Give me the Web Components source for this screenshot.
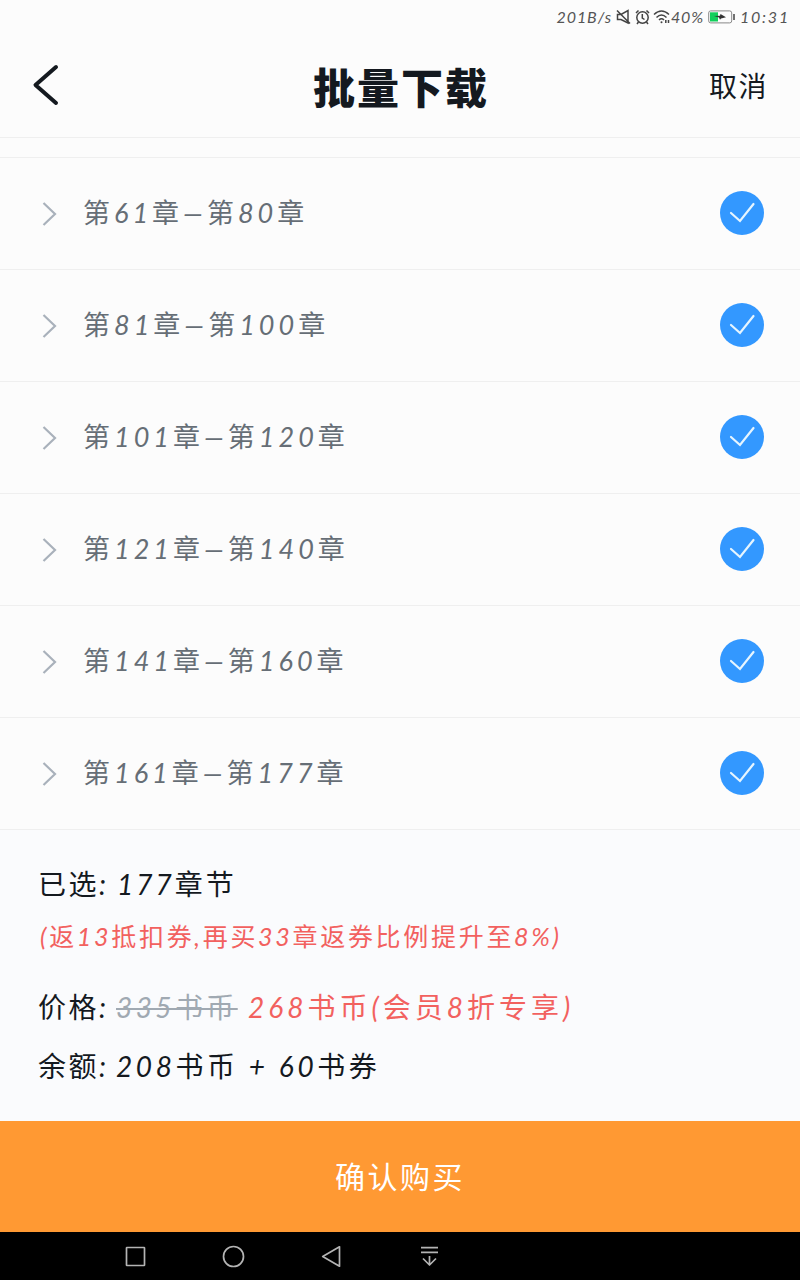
<!DOCTYPE html>
<html lang="zh-CN">
<head>
<meta charset="UTF-8">
<meta name="viewport" content="width=device-width, initial-scale=1">
<title>批量下载</title>
<style>
  body {
    margin: 0;
    background: #fcfcfc;
  }
</style>
</head>
<body>
<download-page></download-page>

<script>
class StatusBar extends HTMLElement {
    constructor() {
        super();
        this.attachShadow({ mode: 'open' });
    }

    connectedCallback() {
        this.shadowRoot.innerHTML = `
        <style>
  :host {
    display: flex;
    justify-content: flex-end;
    align-items: center;
    height: 33px;
    padding-right: 11px;
    box-sizing: border-box;
    font-size: 16px;
    color: #555;
    white-space: nowrap;
  }
  .speed { letter-spacing: 0.9px; }
  .battery { letter-spacing: 0.8px; }
  .time { letter-spacing: 1.8px; margin-right: -1px; }
  svg {
    display: block;
    fill: none;
    stroke: #444;
    stroke-width: 1.5;
  }
  .mute { margin-left: 4px; }
  .alarm { margin-left: 4px; }
  .wifi { margin-left: 3px; }
  .cell { margin: 0 5px 0 4px; }
        </style>
        <span class="speed">201B/s</span>
        <svg class="mute" width="15" height="16" viewBox="0 0 15 16">
            <path d="M1.5 5.5H5L12 1.5V14L5 10.5H1.5ZM1 1.5L14 14.5"/>
        </svg>
        <svg class="alarm" width="15" height="16" viewBox="0 0 15 16">
            <circle cx="7.5" cy="8.5" r="5.7"/>
            <path d="M7.3 5V9L9.5 10.5M1 4L3.5 1.5M14 4L11.5 1.5M3.5 13L2 15M11.5 13L13 15"/>
        </svg>
        <svg class="wifi" width="18" height="16" viewBox="0 0 18 16">
            <path d="M1 5.5Q8.5 -1.5 16 5.5M3.5 8.5Q8.5 3.5 13.5 8.5M6 11Q8.5 8.5 11 11"/>
            <circle cx="8.5" cy="13.2" r="1" fill="#444" stroke="none"/>
            <path d="M12.8 11V14M15.5 11V14"/>
        </svg>
        <span class="battery">40%</span>
        <svg class="cell" width="27" height="14" viewBox="0 0 27 14">
            <rect x="0.7" y="0.9" width="23" height="12" rx="2" stroke="#888" stroke-width="1"/>
            <rect x="2" y="2.3" width="8" height="9.2" fill="#11cf5b" stroke="none"/>
            <path d="M6 6L12 5.7L12.5 4L18 7.3L13 8.5L12 9.8L11 7.5Z" fill="#333" stroke="none"/>
            <path d="M26 4V10"/>
        </svg>
        <span class="time">10:31</span>
        `;
    }
}

class PageHeader extends HTMLElement {
    constructor() {
        super();
        this.attachShadow({ mode: 'open' });
    }

    connectedCallback() {
        this.shadowRoot.innerHTML = `
        <style>
  :host {
    display: grid;
    grid-template-columns: 1fr auto 1fr;
    align-items: center;
    height: 105px;
    padding: 0 32px;
    box-sizing: border-box;
    border-bottom: 1px solid #efefef;
    color: #14191f;
  }
  svg {
    display: block;
    fill: none;
    stroke: #14191f;
    stroke-width: 4;
    stroke-linecap: round;
    stroke-linejoin: round;
  }
  h1 {
    margin: 5px -2px 0 0;
    font-size: 42px;
    font-weight: 900;
    font-style: normal;
    line-height: 60px;
    letter-spacing: 2px;
  }
  .cancel {
    justify-self: end;
    margin-top: 2px;
    font-size: 28px;
    line-height: 40px;
    letter-spacing: 1.5px;
  }
        </style>
        <svg width="28" height="42" viewBox="0 0 28 42"><path d="M24 3L3.5 21L24 39"/></svg>
        <h1><slot></slot></h1>
        <span class="cancel"><slot name="action"></slot></span>
        `;
    }
}

class ChapterRow extends HTMLElement {
    constructor() {
        super();
        this.attachShadow({ mode: 'open' });
    }

    connectedCallback() {
        this.shadowRoot.innerHTML = `
        <style>
  :host {
    display: flex;
    align-items: center;
    height: 112px;
    padding: 0 36px 2px 42px;
    box-sizing: border-box;
    border-bottom: 1px solid #efefef;
    color: #666e76;
  }
  .label {
    flex: 1;
    margin-left: 26px;
    font-size: 27px;
    line-height: 40px;
    letter-spacing: 4px;
  }
  svg {
    display: block;
    fill: none;
  }
  .arrow { margin-top: 2px; }
        </style>
        <svg class="arrow" width="15" height="26" viewBox="0 0 15 26">
            <path d="M1.5 2L13 13L1.5 24" stroke="#a9b1bb" stroke-width="2.2"/>
        </svg>
        <span class="label"><slot></slot></span>
        <svg width="44" height="44" viewBox="0 0 44 44">
            <circle cx="22" cy="22" r="22" fill="#3398ff"/>
            <path d="M11 22L20 30L33.5 13" stroke="#e6f5ff" stroke-width="2.2" stroke-linecap="round"/>
        </svg>
        `;
    }
}

class OrderSummary extends HTMLElement {
    constructor() {
        super();
        this.attachShadow({ mode: 'open' });
    }

    connectedCallback() {
        this.shadowRoot.innerHTML = `
        <style>
  :host {
    display: block;
    height: 291px;
    padding: 34px 38px 0;
    box-sizing: border-box;
    background: #fafbfd;
    color: #14191f;
    font-size: 28px;
    line-height: 40px;
    white-space: nowrap;
  }
  .line { display: flex; }
  .label { width: 78px; letter-spacing: 2.5px; }
  .value { letter-spacing: 3.6px; }
  .count { margin-left: 1px; letter-spacing: 3px; }
  .bonus {
    margin: 12px 0 0 2px;
    font-size: 25px;
    letter-spacing: 2.7px;
    color: #f2615f;
  }
  .price { margin-top: 31px; }
  .balance { margin-top: 19px; }
  .old {
    width: 122px;
    color: #a0a9b2;
    letter-spacing: 3.4px;
    text-decoration: line-through;
    text-decoration-thickness: 2px;
  }
  .new {
    margin-left: 10px;
    color: #f2615f;
    letter-spacing: 4px;
  }
        </style>
        <div class="line"><span class="label">已选:</span><span class="count">177章节</span></div>
        <div class="line bonus">(返13抵扣券,再买33章返券比例提升至8%)</div>
        <div class="line price"><span class="label">价格:</span><span class="old">335书币</span><span class="new">268书币(会员8折专享)</span></div>
        <div class="line balance"><span class="label">余额:</span><span class="value">208书币 + 60书券</span></div>
        `;
    }
}

class ConfirmButton extends HTMLElement {
    constructor() {
        super();
        this.attachShadow({ mode: 'open' });
    }

    connectedCallback() {
        this.shadowRoot.innerHTML = `
        <style>
  :host { display: block; }
  button {
    display: block;
    width: 100%;
    height: 111px;
    padding: 0 0 3px;
    border: none;
    background: #ff9933;
    color: #fff;
    font: inherit;
    font-size: 30px;
    letter-spacing: 2.5px;
    cursor: pointer;
  }
        </style>
        <button><slot></slot></button>
        `;
    }
}

class NavBar extends HTMLElement {
    constructor() {
        super();
        this.attachShadow({ mode: 'open' });
    }

    connectedCallback() {
        this.shadowRoot.innerHTML = `
        <style>
  :host {
    display: flex;
    align-items: center;
    gap: 74px;
    height: 48px;
    padding-left: 123px;
    box-sizing: border-box;
    background: #000;
  }
  svg {
    display: block;
    fill: none;
    stroke: #b4b4b4;
    stroke-width: 1.7;
    stroke-linejoin: round;
  }
        </style>
        <svg width="24" height="24" viewBox="0 0 24 24"><rect x="3.5" y="3.5" width="18" height="18" rx="0.5"/></svg>
        <svg width="24" height="24" viewBox="0 0 24 24"><circle cx="12.5" cy="12.5" r="10"/></svg>
        <svg width="24" height="24" viewBox="0 0 24 24"><path d="M20.5 2.8V22.2L3.7 12.5Z"/></svg>
        <svg width="24" height="24" viewBox="0 0 24 24"><path d="M4 3.7H21M4 8.3H21M12.5 12V21.5M6 14.5L12.5 21L19 14.5"/></svg>
        `;
    }
}

class DownloadPage extends HTMLElement {
    constructor() {
        super();
        this.attachShadow({ mode: 'open' });
        this.chapters = [
            '第61章—第80章',
            '第81章—第100章',
            '第101章—第120章',
            '第121章—第140章',
            '第141章—第160章',
            '第161章—第177章'
        ];
    }

    connectedCallback() {
        // italic digits come from Lato, font-synthesis keeps the chinese text upright
        this.shadowRoot.innerHTML = `
        <style>
  :host {
    display: flex;
    flex-direction: column;
    height: 1280px;
    overflow: hidden;
    background: #fcfcfc;
    font-family: Lato, "Noto Sans CJK SC", sans-serif;
    font-style: italic;
    font-synthesis: none;
  }
  .gap {
    height: 20px;
    box-sizing: border-box;
    border-bottom: 1px solid #efefef;
  }
        </style>
        <status-bar></status-bar>
        <page-header>批量下载<span slot="action">取消</span></page-header>
        <div class="gap"></div>
        <main>${this.renderChapters()}</main>
        <order-summary></order-summary>
        <confirm-button>确认购买</confirm-button>
        <nav-bar></nav-bar>
        `;
    }

    renderChapters() {
        return this.chapters.map(item => `<chapter-row>${item}</chapter-row>`).join('');
    }
}

customElements.define('status-bar', StatusBar);
customElements.define('page-header', PageHeader);
customElements.define('chapter-row', ChapterRow);
customElements.define('order-summary', OrderSummary);
customElements.define('confirm-button', ConfirmButton);
customElements.define('nav-bar', NavBar);
customElements.define('download-page', DownloadPage);
</script>
</body>
</html>
